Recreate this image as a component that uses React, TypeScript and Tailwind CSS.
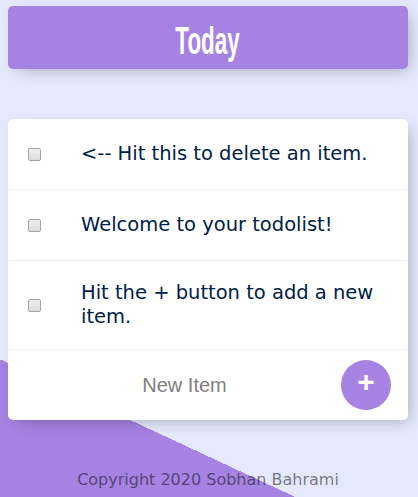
import React, { useState } from 'react';

const initialItems = [
  '<-- Hit this to delete an item.',
  'Welcome to your todolist!',
  'Hit the + button to add a new item.',
];

const App: React.FC = () => {
  const [items, setItems] = useState(initialItems);
  const [newItem, setNewItem] = useState('');

  const handleAdd = (e: React.FormEvent) => {
    e.preventDefault();
    if (!newItem.trim()) return;
    setItems([...items, newItem]);
    setNewItem('');
  };

  return (
    <div className="h-screen overflow-hidden bg-[linear-gradient(25deg,#A683E3_19.9%,#E4E9FD_19.9%)] font-['DejaVu_Sans',sans-serif]">
      <div className="ml-[8px] mt-[6px] w-[400px] rounded-[5px] bg-[#A683E3] shadow-[5px_5px_15px_-5px_rgba(0,0,0,0.3)]">
        <h1 className="h-[63px] pt-[16px] text-center text-white">
          <span className="inline-block scale-x-[0.59] font-['Liberation_Sans_Narrow','Liberation_Sans',sans-serif] text-[38px] font-bold leading-[38px]">
            Today
          </span>
        </h1>
      </div>

      <div className="ml-[8px] mt-[50px] w-[400px] rounded-[5px] bg-white shadow-[5px_5px_15px_-5px_rgba(0,0,0,0.3)]">
        {items.map((item, i) => (
          <div key={i} className="flex min-h-[71px] items-center border-b border-[#F1F1F1]">
            <input
              type="checkbox"
              onChange={() => setItems(items.filter((_, j) => j !== i))}
              className="m-5 h-[13px] w-[13px] shrink-0 appearance-none rounded-[2px] border border-[#a5a5a5] bg-[linear-gradient(#efefef,#dcdcdc)]"
            />
            <p className="p-5 text-[19.5px] leading-[24px] text-[#00204a]">{item}</p>
          </div>
        ))}
        <form onSubmit={handleAdd} className="flex h-[70px] items-center">
          <input
            type="text"
            value={newItem}
            onChange={e => setNewItem(e.target.value)}
            placeholder="New Item"
            autoComplete="off"
            className="ml-5 h-[60px] w-[313px] text-center font-['Liberation_Sans',sans-serif] text-[20px] outline-none placeholder:text-[#808080]"
          />
          <button
            type="submit"
            className="h-[50px] w-[50px] rounded-full bg-[#A683E3] pb-[6px] font-['Liberation_Sans',sans-serif] text-[30px] font-bold leading-[44px] text-white"
          >
            +
          </button>
        </form>
      </div>

      <footer className="ml-[8px] mt-[50px] w-[400px] text-center text-[16px] leading-[19px] text-black/50">
        Copyright 2020 Sobhan Bahrami
      </footer>
    </div>
  );
};

export default App;
